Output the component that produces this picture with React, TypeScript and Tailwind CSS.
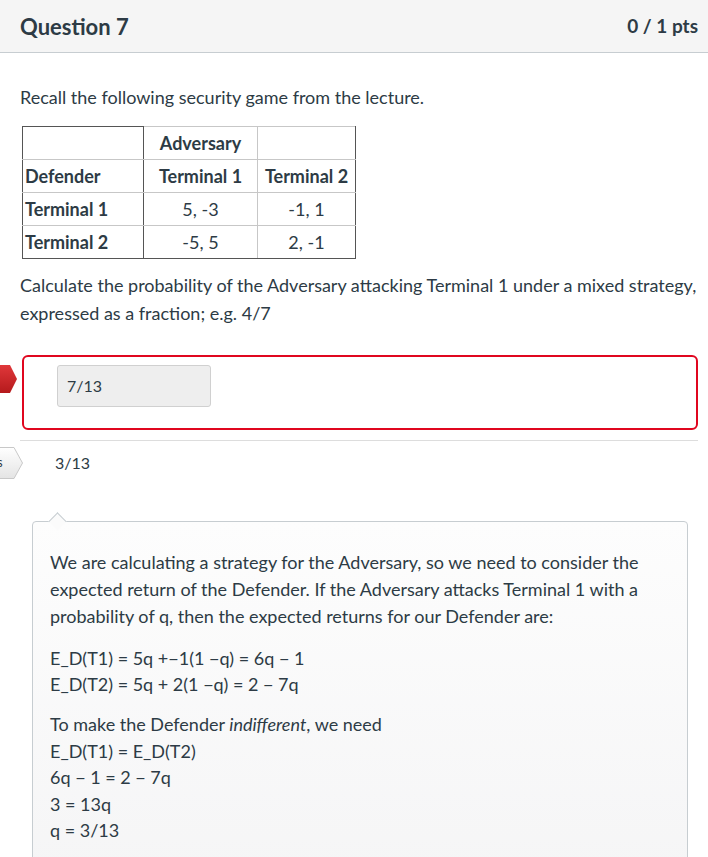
export default function App() {
  return (
    <div className="w-[708px] min-h-[857px] overflow-hidden bg-white text-[#2d3b45] font-['Lato',sans-serif]">
      {/* header */}
      <div className="flex h-[53px] items-center justify-between border-b border-[#c7cdd1] bg-[#f5f5f5] pl-5 pr-[10px]">
        <h2 className="text-[22px] font-bold">Question 7</h2>
        <span className="text-[19px] font-bold">0 / 1 pts</span>
      </div>

      <div className="pl-5 pr-[10px] pt-[31px]">
        <p className="text-[18px] leading-[27px]">Recall the following security game from the lecture.</p>

        <table className="ml-[2px] mt-[15px] border-collapse border border-[#555] text-[18px]">
          <tbody>
            <tr className="h-[33px]">
              <td className="w-[121px] border border-[#555] border-b-[#c7c7c7] border-r-[#555] px-[2px]"></td>
              <td className="w-[114px] border border-[#c7c7c7] border-l-[#555] text-center font-bold">Adversary</td>
              <td className="w-[98px] border border-[#c7c7c7] border-r-[#555]"></td>
            </tr>
            <tr className="h-[33px]">
              <td className="border border-[#c7c7c7] border-l-[#555] border-r-[#555] px-[2px] font-bold">Defender</td>
              <td className="border border-[#c7c7c7] text-center font-bold">Terminal 1</td>
              <td className="border border-[#c7c7c7] border-r-[#555] text-center font-bold">Terminal 2</td>
            </tr>
            <tr className="h-[33px]">
              <td className="border border-[#c7c7c7] border-l-[#555] border-r-[#555] px-[2px] font-bold">Terminal 1</td>
              <td className="border border-[#c7c7c7] text-center">5, -3</td>
              <td className="border border-[#c7c7c7] border-r-[#555] text-center">-1, 1</td>
            </tr>
            <tr className="h-[33px]">
              <td className="border border-[#c7c7c7] border-b-[#555] border-l-[#555] border-r-[#555] px-[2px] font-bold">Terminal 2</td>
              <td className="border border-[#c7c7c7] border-b-[#555] text-center">-5, 5</td>
              <td className="border border-[#c7c7c7] border-b-[#555] border-r-[#555] text-center">2, -1</td>
            </tr>
          </tbody>
        </table>

        <p className="mt-[12px] text-[18px] leading-[28px]">
          Calculate the probability of the Adversary attacking Terminal 1 under a mixed strategy, expressed as a fraction; e.g. 4/7
        </p>

        {/* wrong answer */}
        <div className="relative mt-[28px]">
          <svg className="absolute left-[-20px] top-[10px]" width="18" height="28" viewBox="0 0 18 28">
            <defs>
              <linearGradient id="rg" x1="0" y1="0" x2="0" y2="1">
                <stop offset="0" stopColor="#e0373a" />
                <stop offset="1" stopColor="#b51a1c" />
              </linearGradient>
            </defs>
            <path d="M0 0 H10 L17 14 L10 28 H0 Z" fill="url(#rg)" />
          </svg>
          <div className="ml-[2px] h-[75px] rounded-[6px] border-2 border-[#e0061f] pl-[33px] pt-[8px]">
            <div className="flex h-[42px] w-[154px] items-center rounded-[3px] border border-[#d0d0d0] bg-[#eeeeee] pl-[9px] text-[16px]">
              7/13
            </div>
          </div>
        </div>

        <div className="mt-[10px] border-t border-[#dddddd]" />

        {/* correct answer */}
        <div className="relative flex h-[44px] items-center pl-[35px] text-[16px]">
          <svg className="absolute left-[-20px] top-[6px]" width="24" height="32" viewBox="0 0 24 32">
            <defs>
              <linearGradient id="gg" x1="0" y1="0" x2="0" y2="1">
                <stop offset="0" stopColor="#ffffff" />
                <stop offset="1" stopColor="#e4e4e4" />
              </linearGradient>
            </defs>
            <path d="M-1 0.5 H14 L22.5 16 L14 31.5 H-1 Z" fill="url(#gg)" stroke="#c8c8c8" strokeWidth="1" />
            <text x="-3" y="20" fontSize="13" fill="#2d3b45" fontFamily="Lato, sans-serif">s</text>
          </svg>
          3/13
        </div>

        {/* comment */}
        <div className="relative ml-[12px] mr-[10px] mt-[36px]">
          <div className="absolute left-[19px] top-[-6px] h-[13px] w-[13px] rotate-45 border-l border-t border-[#c7cdd1] bg-[#fbfbfb]" />
          <div className="rounded-[4px] border border-[#c7cdd1] bg-gradient-to-b from-[#fdfdfd] to-[#f5f5f6] pb-[40px] pl-[17px] pr-[17px] pt-[27px] text-[18px]">
            <p className="leading-[27px]">
              We are calculating a strategy for the Adversary, so we need to consider the expected return of the Defender. If the Adversary attacks Terminal 1 with a probability of q, then the expected returns for our Defender are:
            </p>
            <p className="mt-[15px] leading-[26px]">
              E_D(T1) = 5q +−1(1 −q) = 6q − 1
              <br />
              E_D(T2) = 5q + 2(1 −q) = 2 − 7q
            </p>
            <p className="mt-[14px] leading-[26.5px]">
              To make the Defender <em>indifferent</em>, we need
              <br />
              E_D(T1) = E_D(T2)
              <br />
              6q − 1 = 2 − 7q
              <br />
              3 = 13q
              <br />
              q = 3/13
            </p>
          </div>
        </div>
      </div>
    </div>
  );
}
